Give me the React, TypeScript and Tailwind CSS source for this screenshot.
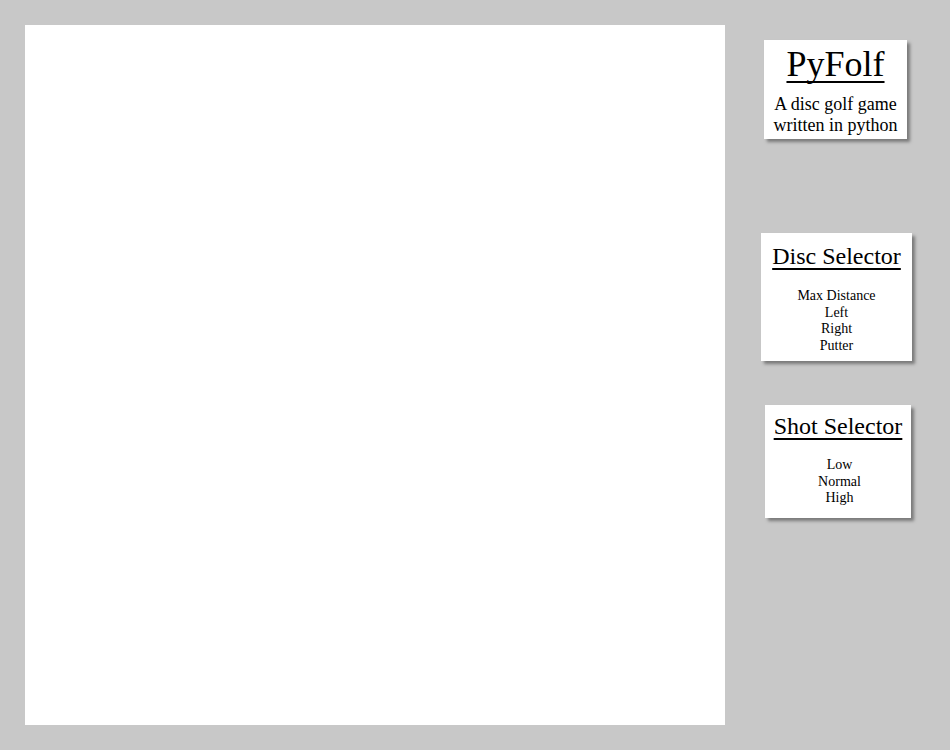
const serif = 'font-["Liberation_Serif","Times_New_Roman",serif]';

const Panel = ({ className, children }: { className: string; children: React.ReactNode }) => (
  <div className={`bg-white text-black text-center shadow-[3px_3px_3px_#7a7a7a] ${className}`}>
    {children}
  </div>
);

export default function App() {
  const discs = ['Max Distance', 'Left', 'Right', 'Putter'];
  const shots = ['Low', 'Normal', 'High'];

  return (
    <div className={`flex h-[750px] w-[950px] bg-[#c8c8c8] ${serif}`}>
      {/* play field */}
      <div className="py-[25px] pl-[25px]">
        <div className="h-[700px] w-[700px] bg-white" />
      </div>

      {/* side bar */}
      <div className="flex flex-1 flex-col items-center">
        <Panel className="mt-[40px] ml-[-4px] w-[143px] pt-[4px] pb-[3px]">
          <h1 className="text-[36px] leading-[41px] underline decoration-2 underline-offset-[5px] [text-decoration-skip-ink:none]">
            PyFolf
          </h1>
          <p className="mt-[9px] text-[18px] leading-[21px]">
            A disc golf game
            <br />
            written in python
          </p>
        </Panel>

        <Panel className="mt-[94px] ml-[-2px] w-[151px] pt-[9px] pb-[7px]">
          <h2 className="text-[24px] leading-[28px] underline decoration-2 underline-offset-[4px] [text-decoration-skip-ink:none]">
            Disc Selector
          </h2>
          <ul className="mt-[18px] text-[14px] leading-[16.5px]">
            {discs.map((d) => (
              <li key={d}>{d}</li>
            ))}
          </ul>
        </Panel>

        <Panel className="mt-[44px] ml-[1px] w-[146px] pt-[7px] pb-[11px]">
          <h2 className="text-[24px] leading-[28px] underline decoration-2 underline-offset-[4px] [text-decoration-skip-ink:none]">
            Shot Selector
          </h2>
          <ul className="mt-[17px] pl-[3px] text-[14px] leading-[16.5px]">
            {shots.map((s) => (
              <li key={s}>{s}</li>
            ))}
          </ul>
        </Panel>
      </div>
    </div>
  );
}
